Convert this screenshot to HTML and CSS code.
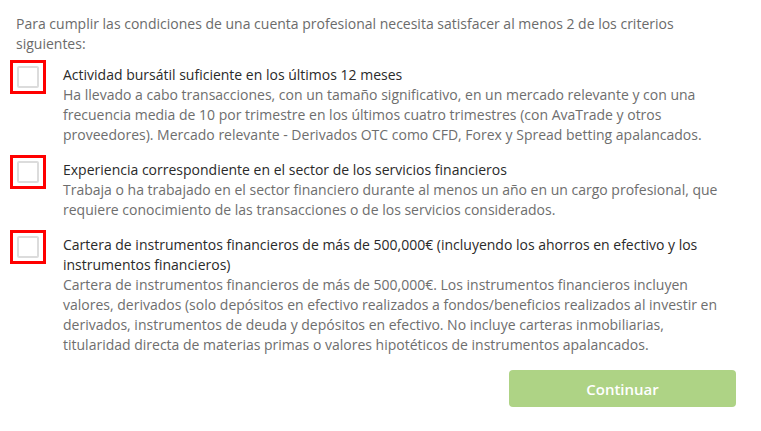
FILE: index.html
```html
<!DOCTYPE html>
<html lang="es">
<head>
<meta charset="utf-8">
<link rel="stylesheet" href="styles.css">
</head>
<body>
<div class="page">
  <p class="intro">Para cumplir las condiciones de una cuenta profesional necesita satisfacer al menos 2 de los criterios siguientes:</p>
  <div class="items">
    <div class="item">
      <label class="check"><span class="box"></span></label>
      <div class="text">
        <div class="title">Actividad bursátil suficiente en los últimos 12 meses</div>
        <div class="desc">Ha llevado a cabo transacciones, con un tamaño significativo, en un mercado relevante y con una frecuencia media de 10 por trimestre en los últimos cuatro trimestres (con AvaTrade y otros proveedores). Mercado relevante - Derivados OTC como CFD, Forex y Spread betting apalancados.</div>
      </div>
    </div>
    <div class="item">
      <label class="check"><span class="box"></span></label>
      <div class="text">
        <div class="title">Experiencia correspondiente en el sector de los servicios financieros</div>
        <div class="desc">Trabaja o ha trabajado en el sector financiero durante al menos un año en un cargo profesional, que requiere conocimiento de las transacciones o de los servicios considerados.</div>
      </div>
    </div>
    <div class="item">
      <label class="check"><span class="box"></span></label>
      <div class="text">
        <div class="title">Cartera de instrumentos financieros de más de 500,000€ (incluyendo los ahorros en efectivo y los instrumentos financieros)</div>
        <div class="desc">Cartera de instrumentos financieros de más de 500,000€. Los instrumentos financieros incluyen valores, derivados (solo depósitos en efectivo realizados a fondos/beneficios realizados al investir en derivados, instrumentos de deuda y depósitos en efectivo. No incluye carteras inmobiliarias, titularidad directa de materias primas o valores hipotéticos de instrumentos apalancados.</div>
      </div>
    </div>
  </div>
  <div class="actions">
    <button class="btn" type="button">Continuar</button>
  </div>
</div>
</body>
</html>
```

FILE: styles.css
```css
html, body {
  margin: 0;
  padding: 0;
  background: #ffffff;
}
body {
  font-family: "Open Sans", "Liberation Sans", sans-serif;
  font-size: 14px;
  line-height: 20px;
  color: #6b6b6b;
}
.page {
  padding: 14px 25px 0 16px;
}
.intro {
  margin: 0 0 11px 0;
  color: #6b6b6b;
}
.items {
  display: flex;
  flex-direction: column;
  gap: 15px;
}
.item {
  display: flex;
  align-items: flex-start;
  margin-left: -6px;
}
.check {
  flex: none;
  box-sizing: border-box;
  width: 36px;
  height: 34px;
  margin-top: -5px;
  border: 3px solid #ff0000;
  display: flex;
  align-items: center;
  justify-content: center;
}
.box {
  box-sizing: border-box;
  width: 22px;
  height: 22px;
  border: 2px solid #dcdcdc;
  border-radius: 2px;
  background: #fff;
}
.text {
  margin-left: 17px;
  padding-right: 10px;
  flex: 1;
}
.title {
  color: #2a2a2a;
}
.desc {
  color: #6e6e6e;
}
.actions {
  display: flex;
  justify-content: flex-end;
  margin-top: 15px;
}
.btn {
  width: 227px;
  height: 37px;
  border: none;
  border-radius: 4px;
  background: #aed385;
  color: #ffffff;
  font-family: "Open Sans", "Liberation Sans", sans-serif;
  font-weight: 600;
  font-size: 15px;
  padding: 0;
}
```
